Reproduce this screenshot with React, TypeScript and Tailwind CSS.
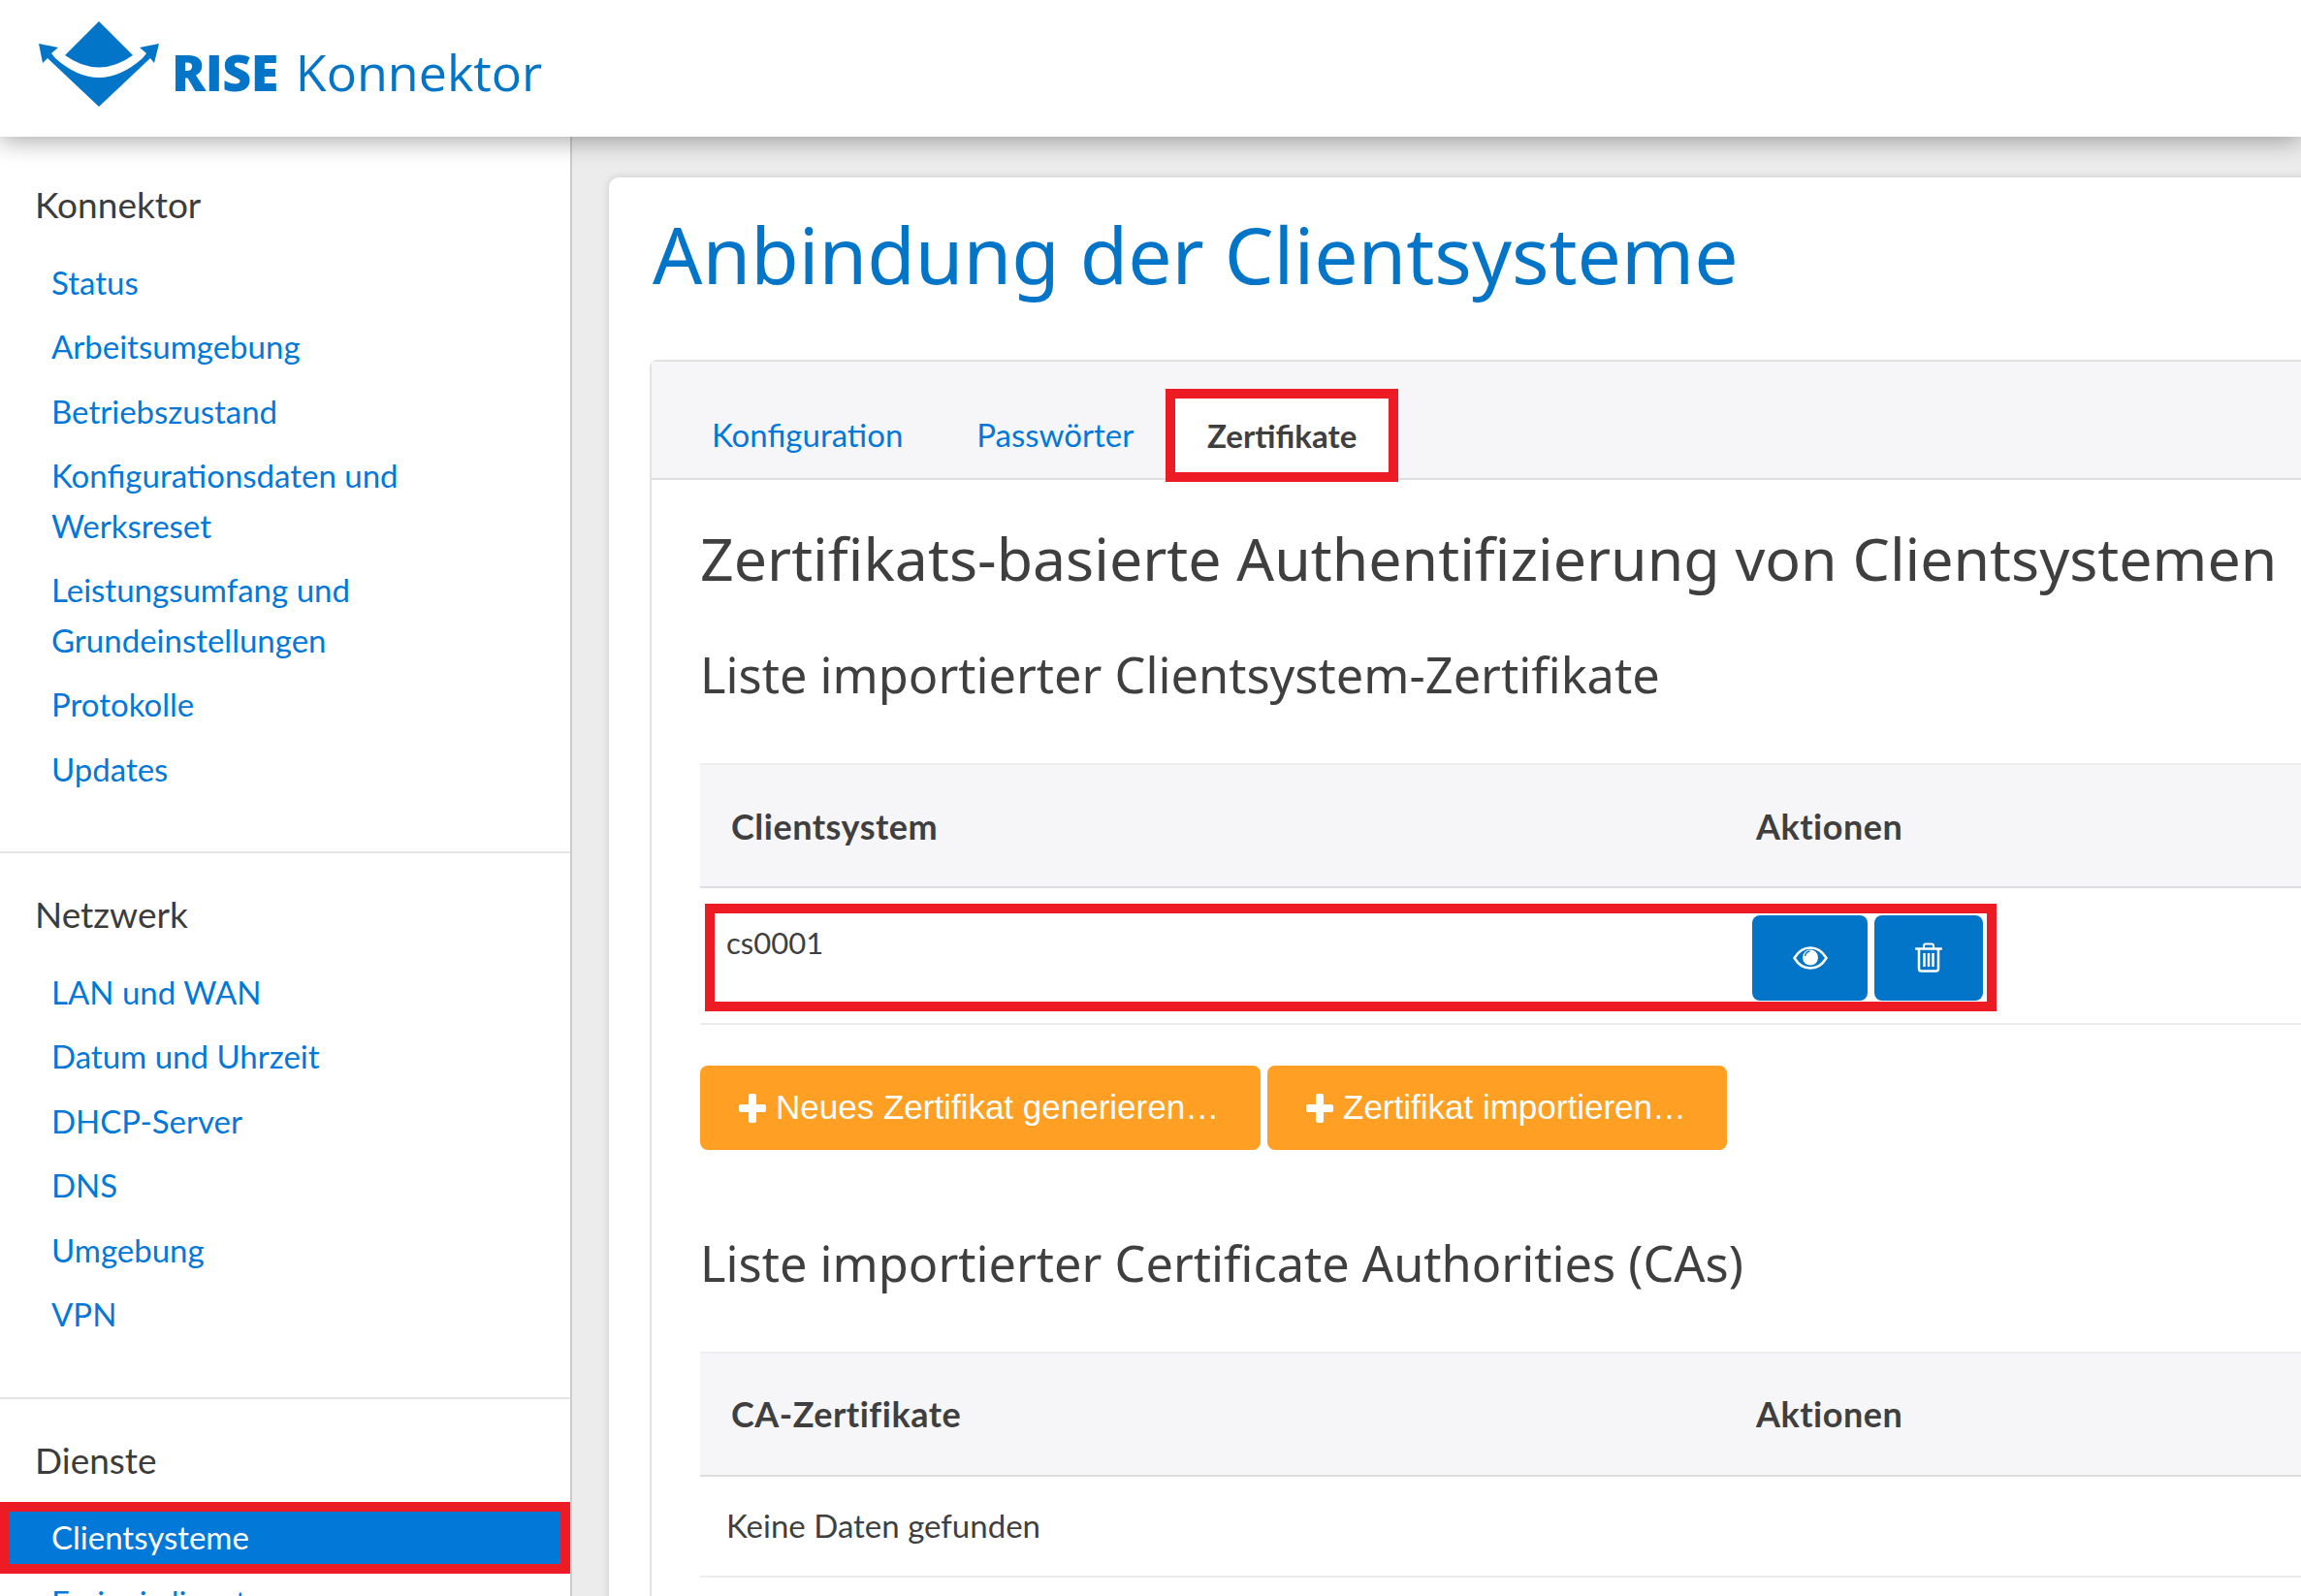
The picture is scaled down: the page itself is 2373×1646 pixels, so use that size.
const sans = 'font-["Lato","Liberation_Sans",sans-serif]'

const groups = [
  {
    title: 'Konnektor',
    items: [
      'Status',
      'Arbeitsumgebung',
      'Betriebszustand',
      'Konfigurationsdaten und Werksreset',
      'Leistungsumfang und Grundeinstellungen',
      'Protokolle',
      'Updates',
    ],
  },
  {
    title: 'Netzwerk',
    items: ['LAN und WAN', 'Datum und Uhrzeit', 'DHCP-Server', 'DNS', 'Umgebung', 'VPN'],
  },
]

const Logo = () => (
  <svg width="128" height="90" viewBox="38 21 128 90" aria-hidden="true" className="mb-[9px] shrink-0">
    <g fill="#0275c9">
      <path d="M102 22 L137 57 Q102 82 67 57 Z" />
      <path d="M40 45 L60 49 L53 55 L57 60 Q102 100 147 60 L151 55 L144 49 L164 45 L159 65 L155 60 L102 110 L49 60 L44 65 Z" />
    </g>
  </svg>
)

const Plus = () => (
  <svg width="28" height="30" viewBox="0 0 28 30" fill="white" aria-hidden="true" className="shrink-0">
    <rect x="10" y="0" width="8" height="30" rx="2" />
    <rect x="0" y="11" width="28" height="8" rx="2" />
  </svg>
)

const EyeIcon = () => (
  <svg width="36" height="24" viewBox="0 0 36 24" aria-hidden="true">
    <path d="M1.5 12 C6 4.5 12 1.5 18 1.5 C24 1.5 30 4.5 34.5 12 C30 19.5 24 22.5 18 22.5 C12 22.5 6 19.5 1.5 12 Z" fill="none" stroke="white" strokeWidth="2.5" />
    <circle cx="18" cy="11.5" r="8" fill="white" />
    <path d="M12.5 10 C13 7 15 5.5 17.5 5" fill="none" stroke="#0275c9" strokeWidth="1.4" />
  </svg>
)

const TrashIcon = () => (
  <svg width="28" height="31" viewBox="0 0 28 31" fill="none" stroke="white" aria-hidden="true">
    <path d="M1 6.5 H27" strokeWidth="2.5" strokeLinecap="round" />
    <path d="M9 6 V3.5 Q9 1.5 11 1.5 H17 Q19 1.5 19 3.5 V6" strokeWidth="2" />
    <path d="M4 7 V27 Q4 29.5 6.5 29.5 H21.5 Q24 29.5 24 27 V7" strokeWidth="2.5" />
    <path d="M9.5 11 V25 M14 11 V25 M18.5 11 V25" strokeWidth="2.5" />
  </svg>
)

const SideItem = ({ label }: { label: string }) => (
  <a className="block py-[7.5px] pl-[53px] pr-[80px] text-[33px] leading-[51.5px] text-[#0278d8]">{label}</a>
)

const TableHead = ({ left }: { left: string }) => (
  <div className="flex h-[129px] items-center border-y-2 border-y-[#dcdddf] border-t-[#eeeeee] bg-[#f6f6f8] text-[36px] font-bold tracking-[0.5px] text-[#3f3f3f]">
    <div className="w-[1089px] pl-[32px]">{left}</div>
    <div>Aktionen</div>
  </div>
)

export default function App() {
  return (
    <div className={`flex h-[1646px] w-[2373px] flex-col overflow-hidden bg-[#ececec] ${sans}`}>
      <header className="relative z-10 flex h-[141px] shrink-0 items-center bg-white pl-[38px] shadow-[0_4px_24px_rgba(0,0,0,0.35)]">
        <Logo />
        <div className="ml-[11px] flex items-baseline pt-[6px] text-[52px] leading-none text-[#0275c9] font-['Open_Sans',sans-serif]">
          <span className="font-extrabold tracking-[-0.5px]">RISE</span>
          <span className="ml-[18px]">Konnektor</span>
        </div>
      </header>

      <div className="flex min-h-0 flex-1">
        <aside className="w-[590px] shrink-0 border-r-2 border-[#cccccc] bg-white">
          {groups.map((group, i) => (
            <section key={group.title} className={`border-b-2 border-[#e4e4e4] pb-[51.5px] ${i === 0 ? 'pt-[44px]' : 'pt-[37px]'}`}>
              <h4 className="mb-[22px] pl-[36px] text-[37px] leading-[51px] text-[#3c3c3c]">{group.title}</h4>
              {group.items.map((item) => (
                <SideItem key={item} label={item} />
              ))}
            </section>
          ))}
          <section className="pt-[37px]">
            <h4 className="mb-[22px] pl-[36px] text-[37px] leading-[51px] text-[#3c3c3c]">Dienste</h4>
            <div className="relative">
              <a className="block bg-[#0278d8] py-[7.5px] pl-[53px] text-[33px] leading-[51.5px] text-white">Clientsysteme</a>
              <span className="absolute inset-x-0 -top-[4px] -bottom-[4px] border-[10px] border-[#ed1c24]" />
            </div>
            <SideItem label="Ereignisdienst" />
          </section>
        </aside>

        <main className="min-w-0 flex-1 pl-[38px] pt-[42px]">
          <div className="h-[1500px] w-[1900px] rounded-l-[10px] bg-white pl-[42px] pr-[20px] pt-[32px] shadow-[0_0_8px_rgba(0,0,0,0.15)]">
            <h1 className="mb-[62px] pl-[3px] text-[80.5px] leading-[94px] text-[#0275c9] font-['Noto_Sans',sans-serif]">Anbindung der Clientsysteme</h1>

            <div className="rounded-tl-[8px] border-l-2 border-t-2 border-[#e2e2e2] pb-[60px]">
              <div className="flex h-[122px] items-end border-b-2 border-[#dddddd] bg-[#f6f6f8] pl-[62px] text-[33px] leading-[51px] text-[#0278d8]">
                <span className="pb-[19px]">Konfiguration</span>
                <span className="ml-[76px] pb-[19px]">Passwörter</span>
                <div className="relative z-[1] -mb-[4px] ml-[33px] flex h-[96px] w-[240px] items-center justify-center border-[10px] border-[#ed1c24] bg-white font-bold text-[#3f3f3f]">Zertifikate</div>
              </div>

              <div className="pl-[50px]">
                <h2 className="pt-[47px] text-[60.8px] leading-[68px] text-[#3f3f3f] font-['Noto_Sans',sans-serif]">Zertifikats-basierte Authentifizierung von Clientsystemen</h2>
                <h3 className="mt-[55.5px] text-[50.5px] leading-[60px] text-[#3f3f3f] font-['Noto_Sans',sans-serif]">Liste importierter Clientsystem-Zertifikate</h3>

                <div className="mt-[61.5px]">
                  <TableHead left="Clientsystem" />
                  <div className="relative h-[141px] border-b-2 border-[#ececec] text-[31px] text-[#3f3f3f]">
                    <div className="absolute left-[5px] top-[16px] flex h-[111px] w-[1332px] border-[10px] border-[#ed1c24] bg-white">
                      <div className="w-[1070px] pl-[12px] pt-[11px] leading-[38px]">cs0001</div>
                      <div className="flex items-center gap-[7px]">
                        <button type="button" className="flex h-[88px] w-[119px] items-center justify-center rounded-[8px] bg-[#0275c9]"><EyeIcon /></button>
                        <button type="button" className="flex h-[88px] w-[112px] items-center justify-center rounded-[8px] bg-[#0275c9]"><TrashIcon /></button>
                      </div>
                    </div>
                  </div>
                </div>

                <div className="mt-[42px] flex gap-[7px] text-[35px] text-white font-['Liberation_Sans',sans-serif]">
                  <button type="button" className="flex h-[87px] w-[578px] items-center gap-[10px] rounded-[8px] bg-[#ffa024] pl-[40px]"><Plus />Neues Zertifikat generieren…</button>
                  <button type="button" className="flex h-[87px] w-[474px] items-center gap-[10px] rounded-[8px] bg-[#ffa024] pl-[40px]"><Plus />Zertifikat importieren…</button>
                </div>

                <h3 className="mt-[86.5px] text-[50.5px] leading-[60px] text-[#3f3f3f] font-['Noto_Sans',sans-serif]">Liste importierter Certificate Authorities (CAs)</h3>

                <div className="mt-[61px]">
                  <TableHead left="CA-Zertifikate" />
                  <div className="flex h-[104px] items-center border-b-2 border-[#ececec] pl-[27px] text-[33px] text-[#3f3f3f]">Keine Daten gefunden</div>
                </div>
              </div>
            </div>
          </div>
        </main>
      </div>
    </div>
  )
}
